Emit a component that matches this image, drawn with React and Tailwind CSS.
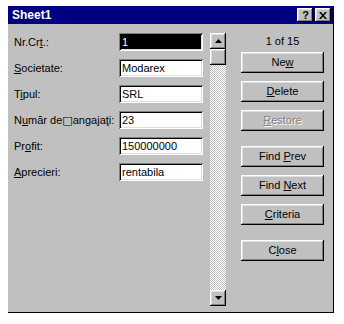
import React from "react";

const raised =
  "shadow-[inset_-1px_-1px_#000000,inset_1px_1px_#ffffff,inset_-2px_-2px_#808080,inset_2px_2px_#dfdfdf]";
const sunken =
  "shadow-[inset_1px_1px_#808080,inset_-1px_-1px_#ffffff,inset_2px_2px_#000000,inset_-2px_-2px_#dfdfdf]";

function Btn({ children, disabled }) {
  return (
    <div
      className={`h-[21px] w-[83px] flex items-center justify-center bg-[#c0c0c0] ${raised} ${
        disabled ? "text-[#808080] [text-shadow:1px_1px_#ffffff]" : "text-black"
      }`}
    >
      <span className="leading-none">{children}</span>
    </div>
  );
}

function Row({ label, value, selected }) {
  return (
    <div className="flex items-center h-[18px]">
      <div className="w-[105px] text-black whitespace-nowrap">{label}</div>
      <div
        className={`w-[84px] h-[18px] flex items-center pl-[3px] ${sunken} ${
          selected ? "bg-black text-white" : "bg-white text-black"
        }`}
      >
        <span>{value}</span>
      </div>
    </div>
  );
}

const U = ({ children }) => <span className="underline underline-offset-[1px]">{children}</span>;

export default function App() {
  return (
    <div
      className="w-[344px] h-[324px] bg-white pt-[6px] pl-[8px] text-[11px]"
      style={{ fontFamily: '"Liberation Sans", Arial, sans-serif' }}
    >
      <div className="w-[326px] h-[307px] bg-[#c0c0c0] border-r border-b border-black flex flex-col">
        {/* Title bar */}
        <div className="h-[18px] bg-[#000080] flex items-center pl-[4px] pr-[2px]">
          <span className="text-white font-bold text-[12px] leading-none">Sheet1</span>
          <div className="ml-auto flex gap-[2px]">
            <div className={`w-[16px] h-[14px] bg-[#c0c0c0] ${raised} flex items-center justify-center`}>
              <span className="font-bold text-[11px] leading-none text-black pl-[1px]">?</span>
            </div>
            <div className={`w-[16px] h-[14px] bg-[#c0c0c0] ${raised} flex items-center justify-center`}>
              <svg width="8" height="7" viewBox="0 0 8 7">
                <path d="M0 0h2l2 2.5L6 0h2L5 3.5 8 7H6L4 4.5 2 7H0l3-3.5z" fill="#000" />
              </svg>
            </div>
          </div>
        </div>

        {/* Body */}
        <div className="flex-1 flex">
          {/* fields */}
          <div className="pl-[6px] pt-[9px] flex flex-col gap-[8px]">
            <Row label={<>Nr.Cr<U>t</U>.:</>} value="1" selected />
            <Row label={<><U>S</U>ocietate:</>} value="Modarex" />
            <Row label={<>T<U>i</U>pul:</>} value="SRL" />
            <Row
              label={
                <>
                  N<U>u</U>măr de<span className="font-['DejaVu_Sans'] text-[11px] leading-none">□</span>angajaţi:
                </>
              }
              value="23"
            />
            <Row label={<>Pr<U>o</U>fit:</>} value="150000000" />
            <Row label={<><U>A</U>precieri:</>} value="rentabila" />
          </div>

          {/* scrollbar */}
          <div className="ml-[7px] mt-[9px] w-[16px] h-[273px] flex flex-col bg-[repeating-conic-gradient(#c0c0c0_0%_25%,#ffffff_0%_50%)] bg-[length:2px_2px]">
            <div className={`w-[16px] h-[16px] bg-[#c0c0c0] ${raised} flex items-center justify-center`}>
              <svg width="7" height="4" viewBox="0 0 7 4">
                <path d="M3.5 0L7 4H0z" fill="#000" />
              </svg>
            </div>
            <div className={`w-[16px] h-[16px] bg-[#c0c0c0] ${raised}`} />
            <div className="flex-1" />
            <div className={`w-[16px] h-[16px] bg-[#c0c0c0] ${raised} flex items-center justify-center`}>
              <svg width="7" height="4" viewBox="0 0 7 4">
                <path d="M0 0h7L3.5 4z" fill="#000" />
              </svg>
            </div>
          </div>

          {/* buttons */}
          <div className="ml-[15px] w-[83px] pt-[10px] flex flex-col">
            <div className="h-[14px] leading-[14px] text-center text-black mb-[4px]">1 of 15</div>
            <div className="flex flex-col gap-[8px]">
              <Btn>Ne<U>w</U></Btn>
              <Btn><U>D</U>elete</Btn>
              <Btn disabled><U>R</U>estore</Btn>
            </div>
            <div className="flex flex-col gap-[8px] mt-[15px]">
              <Btn>Find <U>P</U>rev</Btn>
              <Btn>Find <U>N</U>ext</Btn>
              <Btn><U>C</U>riteria</Btn>
            </div>
            <div className="mt-[15px]">
              <Btn>C<U>l</U>ose</Btn>
            </div>
          </div>
        </div>
      </div>
    </div>
  );
}
